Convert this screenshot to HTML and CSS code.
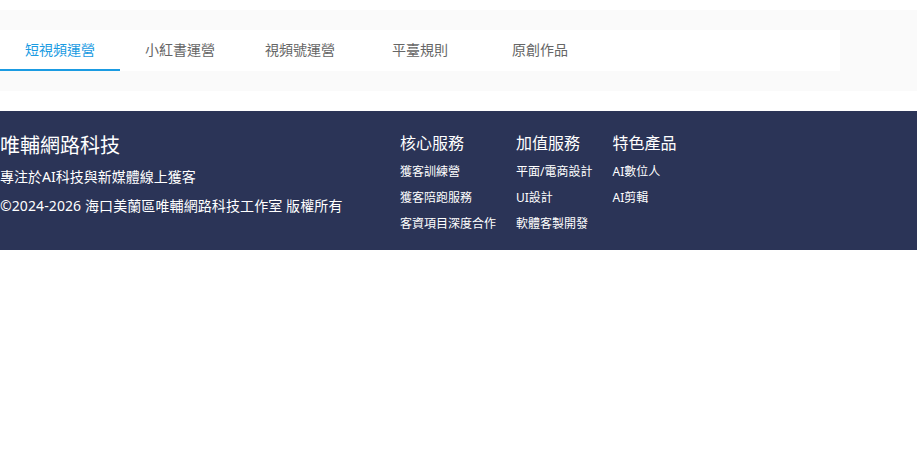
FILE: index.html
```html
<!DOCTYPE html>
<html lang="zh-Hant">
<head>
<meta charset="utf-8">
<link rel="stylesheet" href="styles.css">
</head>
<body>
<div class="band">
  <nav class="tabs">
    <div class="tab active">短視頻運營</div>
    <div class="tab">小紅書運營</div>
    <div class="tab">視頻號運營</div>
    <div class="tab">平臺規則</div>
    <div class="tab">原創作品</div>
  </nav>
</div>
<footer class="footer">
  <div class="brand">
    <div class="brand-name">唯輔網路科技</div>
    <div class="brand-slogan">專注於AI科技與新媒體線上獲客</div>
    <div class="brand-copy">©2024-2026 海口美蘭區唯輔網路科技工作室 版權所有</div>
  </div>
  <div class="col">
    <div class="col-title">核心服務</div>
    <div class="col-item">獲客訓練營</div>
    <div class="col-item">獲客陪跑服務</div>
    <div class="col-item">客資項目深度合作</div>
  </div>
  <div class="col">
    <div class="col-title">加值服務</div>
    <div class="col-item">平面/電商設計</div>
    <div class="col-item">UI設計</div>
    <div class="col-item">軟體客製開發</div>
  </div>
  <div class="col">
    <div class="col-title">特色產品</div>
    <div class="col-item">AI數位人</div>
    <div class="col-item">AI剪輯</div>
  </div>
</footer>
</body>
</html>
```
FILE: styles.css
```css
html, body {
  margin: 0;
  padding: 0;
  background: #ffffff;
  font-family: "Noto Sans", "Noto Sans CJK TC", sans-serif;
}
.band {
  margin-top: 10px;
  background: #fafafa;
  padding: 20px 0;
}
.tabs {
  width: 840px;
  height: 41px;
  background: #ffffff;
  display: flex;
}
.tab {
  width: 120px;
  box-sizing: border-box;
  height: 41px;
  line-height: 40px;
  text-align: center;
  font-size: 14px;
  color: #666666;
}
.tab.active {
  color: #1a9be2;
  border-bottom: 2px solid #1a9be2;
  line-height: 39px;
}
.footer {
  margin-top: 20px;
  background: #2b3457;
  color: #ffffff;
  display: flex;
  gap: 20px;
  padding: 21px 0 13px;
}
.brand {
  width: 380px;
}
.brand-name {
  font-size: 20px;
  line-height: 28px;
}
.brand-slogan {
  font-size: 14px;
  line-height: 20px;
  margin-top: 7px;
}
.brand-copy {
  font-size: 14px;
  line-height: 20px;
  margin-top: 9px;
  letter-spacing: 0.1px;
}
.col-title {
  font-size: 16px;
  line-height: 22px;
  margin-bottom: 5px;
}
.col-item {
  font-size: 12px;
  line-height: 26px;
}
```
